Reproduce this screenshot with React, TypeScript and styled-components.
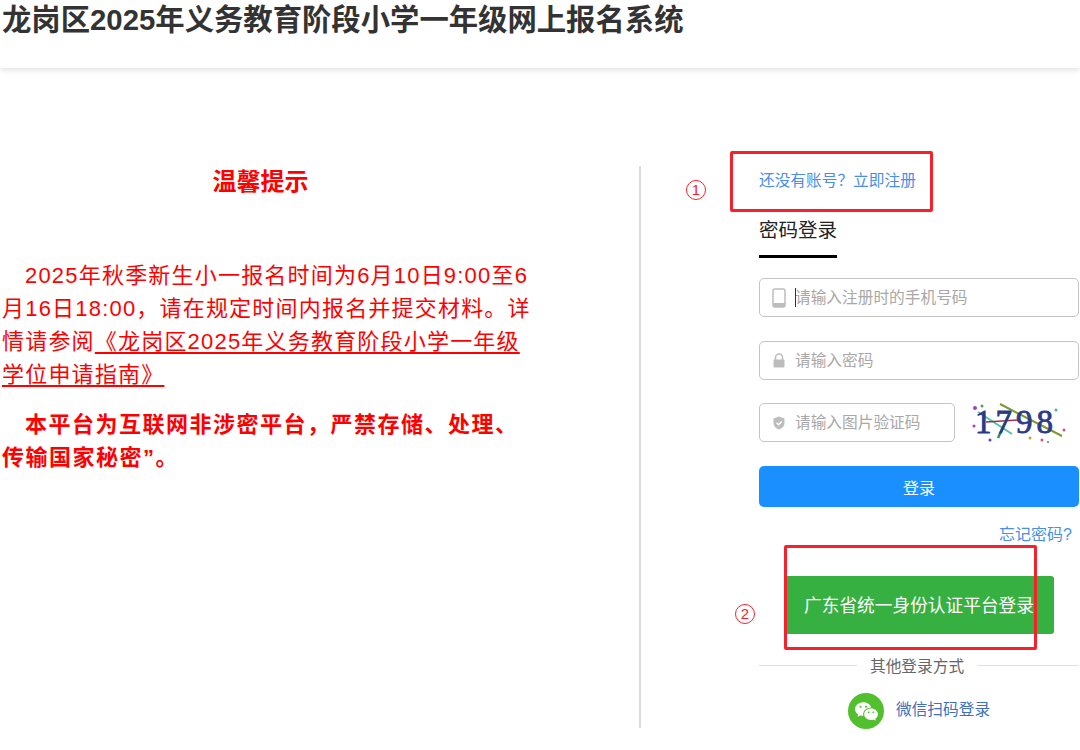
import styled, { createGlobalStyle } from 'styled-components';
import { RiWechatFill } from 'react-icons/ri';

const GlobalStyle = createGlobalStyle`
    html, body {
        margin: 0;
        padding: 0;
        background: #fff;
        overflow: hidden;
    }
    * {
        box-sizing: border-box;
    }
    body {
        font-family: 'Liberation Sans', 'Noto Sans CJK SC', sans-serif;
    }
`;

const Page = styled.div`
    position: relative;
    width: 1080px;
    height: 750px;
    overflow: hidden;
`;

const Header = styled.header`
    height: 68px;
    box-shadow: 0 2px 6px rgba(0, 0, 0, 0.12);
`;

const Title = styled.h1`
    margin: 0;
    padding: 1px 0 0 2px;
    font-size: 29.35px;
    line-height: 38px;
    font-weight: 700;
    color: #333;
`;

const Main = styled.main`
    display: grid;
    grid-template-columns: 641px 320px;
    column-gap: 118px;
    padding-top: 98px;
`;

const Notice = styled.section`
    height: 562px;
    border-right: 2px solid #d9d9d9;
    color: #f00;
`;

const NoticeTitle = styled.h2`
    width: 530px;
    height: 30px;
    margin: 0 0 63px;
    padding-right: 9px;
    text-align: center;
    font-size: 24px;
    line-height: 32px;
    font-weight: 700;
`;

const Para = styled.p<{ $bold?: boolean }>`
    margin: 0 0 ${(p) => (p.$bold ? 0 : '17px')};
    padding-left: 2px;
    width: ${(p) => (p.$bold ? 525 : 536)}px;
    font-size: 22px;
    line-height: 33px;
    letter-spacing: ${(p) => (p.$bold ? '1.5px' : '1.2px')};
    font-weight: ${(p) => (p.$bold ? 700 : 400)};
    text-indent: 23px;
`;

const GuideLink = styled.span`
    text-decoration: underline;
    text-underline-offset: 3px;
`;

const LoginPanel = styled.section`
    display: flex;
    flex-direction: column;
`;

const RegisterLink = styled.a`
    height: 28px;
    margin-bottom: 24px;
    font-size: 15.7px;
    line-height: 30px;
    color: #4a8eea;
`;

const Tab = styled.div`
    width: 78px;
    height: 40px;
    margin-bottom: 20px;
    border-bottom: 3px solid #000;
    font-size: 19.5px;
    line-height: 24px;
    color: #222;
    white-space: nowrap;
`;

const Field = styled.label<{ $width?: number }>`
    position: relative;
    display: flex;
    align-items: center;
    gap: 9px;
    width: ${(p) => p.$width ?? 320}px;
    height: 39px;
    padding-left: 12px;
    border: 1px solid #c4c4c4;
    border-radius: 5px;
    color: #bdbdbd;
`;

const FieldGap = styled.div<{ $height: number }>`
    height: ${(p) => p.$height}px;
`;

const FieldIcon = styled.svg`
    flex: 0 0 14px;
    width: 14px;
    height: 20px;
`;

const FieldInput = styled.input`
    flex: 1;
    min-width: 0;
    border: 0;
    outline: 0;
    padding: 0;
    background: transparent;
    font: inherit;
    font-size: 15.7px;
    &::placeholder {
        color: #a8a8a8;
        opacity: 1;
    }
`;

const Caret = styled.span`
    position: absolute;
    left: 35px;
    top: 9px;
    width: 1px;
    height: 19px;
    background: #333;
`;

const CaptchaRow = styled.div`
    display: flex;
    align-items: center;
    gap: 15px;
    height: 39px;
`;

const LoginButton = styled.button`
    width: 320px;
    height: 41px;
    margin-top: 24px;
    border: 0;
    border-radius: 5px;
    background: #1a8fff;
    color: #fff;
    font: inherit;
    font-size: 16px;
`;

const ForgotLink = styled.a`
    align-self: flex-end;
    height: 22px;
    margin: 17px 7px 0 0;
    font-size: 16px;
    line-height: 22px;
    color: #4a8eea;
`;

const GovButton = styled.button`
    align-self: flex-start;
    width: 269px;
    height: 58px;
    margin: 30px 0 0 26px;
    padding: 0 0 2px 19px;
    border: 0;
    border-radius: 3px;
    background: #36b040;
    color: #fff;
    font: inherit;
    font-size: 17.7px;
    text-align: left;
    white-space: nowrap;
`;

const Divider = styled.div`
    display: flex;
    align-items: center;
    gap: 13px;
    height: 24px;
    margin-top: 19px;
    font-size: 15.7px;
    color: #666;
    &::before,
    &::after {
        content: '';
        height: 1px;
        background: #e0e0e0;
    }
    &::before {
        flex: 0 0 98px;
    }
    &::after {
        flex: 1;
    }
`;

const WechatRow = styled.div`
    display: flex;
    align-items: center;
    gap: 12px;
    margin: 16px 0 0 89px;
    font-size: 15.7px;
    color: #3f6fc0;
`;

const WechatBadge = styled.span`
    display: flex;
    align-items: center;
    justify-content: center;
    width: 36px;
    height: 36px;
    border-radius: 50%;
    background: #52bf2f;
    color: #fff;
    font-size: 25px;
`;

const WechatLabel = styled.span`
    margin-bottom: 5px;
`;

const MarkBox = styled.div<{ $left: number; $top: number; $width: number; $height: number }>`
    position: absolute;
    left: ${(p) => p.$left}px;
    top: ${(p) => p.$top}px;
    width: ${(p) => p.$width}px;
    height: ${(p) => p.$height}px;
    border: 3px solid #f5222d;
    border-radius: 2px;
    pointer-events: none;
`;

const MarkNumber = styled.span<{ $left: number; $top: number }>`
    position: absolute;
    left: ${(p) => p.$left}px;
    top: ${(p) => p.$top}px;
    width: 20px;
    height: 20px;
    border: 1.5px solid #f5222d;
    border-radius: 50%;
    color: #f5222d;
    font-size: 15px;
    line-height: 17px;
    text-align: center;
`;

const CaptchaImage = () => (
    <svg width='100' height='42' viewBox='0 0 100 42'>
        <path d='M30 2 L92 34' stroke='#7a9a2a' strokeWidth='2' fill='none' />
        <path d='M8 10 L42 32' stroke='#4fc4a8' strokeWidth='2' fill='none' />
        <path d='M16 20 L50 18' stroke='#a0304a' strokeWidth='1.5' fill='none' />
        <path d='M28 36 L40 10' stroke='#2f8a70' strokeWidth='2.5' fill='none' />
        <text x='5' y='31' fontFamily='Liberation Serif' fontSize='33' fontWeight='400' fill='#2a3a85' letterSpacing='4' stroke='#2a3a85' strokeWidth='0.8'>
            1798
        </text>
        <circle cx='5' cy='6' r='2' fill='#a040c0' />
        <circle cx='12' cy='4' r='1.5' fill='#50a060' />
        <circle cx='4' cy='24' r='1.5' fill='#a040c0' />
        <circle cx='60' cy='36' r='1.5' fill='#d0a030' />
        <circle cx='72' cy='38' r='1.5' fill='#d05080' />
        <circle cx='86' cy='8' r='1.5' fill='#40b0b0' />
        <circle cx='94' cy='28' r='1.5' fill='#d05080' />
        <circle cx='78' cy='40' r='1' fill='#3a8a50' />
        <circle cx='20' cy='38' r='1.5' fill='#6040c0' />
    </svg>
);

const App = () => {
    return (
        <Page>
            <GlobalStyle />
            <Header>
                <Title>龙岗区2025年义务教育阶段小学一年级网上报名系统</Title>
            </Header>
            <Main>
                <Notice>
                    <NoticeTitle>温馨提示</NoticeTitle>
                    <Para>
                        2025年秋季新生小一报名时间为6月10日9:00至6月16日18:00，请在规定时间内报名并提交材料。详情请参阅
                        <GuideLink>《龙岗区2025年义务教育阶段小学一年级学位申请指南》</GuideLink>
                    </Para>
                    <Para $bold>本平台为互联网非涉密平台，严禁存储、处理、传输国家秘密”。</Para>
                </Notice>
                <LoginPanel>
                    <RegisterLink>还没有账号？立即注册</RegisterLink>
                    <Tab>密码登录</Tab>
                    <Field>
                        <FieldIcon viewBox='0 0 14 20'>
                            <rect x='1' y='1' width='12' height='18' rx='2' fill='none' stroke='#bdbdbd' strokeWidth='1.5' />
                            <rect x='1' y='15' width='12' height='4' fill='#bdbdbd' />
                        </FieldIcon>
                        <FieldInput placeholder='请输入注册时的手机号码' />
                        <Caret />
                    </Field>
                    <FieldGap $height={24} />
                    <Field>
                        <FieldIcon viewBox='0 0 14 20'>
                            <path d='M3.5 9V6.5a3.5 3.5 0 0 1 7 0V9' fill='none' stroke='#bdbdbd' strokeWidth='1.6' />
                            <rect x='1.5' y='8.5' width='11' height='8' rx='1' fill='#bdbdbd' />
                        </FieldIcon>
                        <FieldInput placeholder='请输入密码' />
                    </Field>
                    <FieldGap $height={23} />
                    <CaptchaRow>
                        <Field $width={196}>
                            <FieldIcon viewBox='0 0 14 20'>
                                <path d='M7 3.5l5.5 2v4.5c0 3.3-2.4 5.5-5.5 6.5-3.1-1-5.5-3.2-5.5-6.5V5.5z' fill='#bdbdbd' />
                                <path d='M4.5 9.8l2 2 3.2-3.4' fill='none' stroke='#fff' strokeWidth='1.4' />
                            </FieldIcon>
                            <FieldInput placeholder='请输入图片验证码' />
                        </Field>
                        <CaptchaImage />
                    </CaptchaRow>
                    <LoginButton>登录</LoginButton>
                    <ForgotLink>忘记密码?</ForgotLink>
                    <GovButton>广东省统一身份认证平台登录</GovButton>
                    <Divider>其他登录方式</Divider>
                    <WechatRow>
                        <WechatBadge>
                            <RiWechatFill />
                        </WechatBadge>
                        <WechatLabel>微信扫码登录</WechatLabel>
                    </WechatRow>
                </LoginPanel>
            </Main>
            <MarkBox $left={730} $top={151} $width={203} $height={61} />
            <MarkNumber $left={686} $top={180}>1</MarkNumber>
            <MarkBox $left={784} $top={545} $width={253} $height={105} />
            <MarkNumber $left={735} $top={604}>2</MarkNumber>
        </Page>
    );
};

export default App;
